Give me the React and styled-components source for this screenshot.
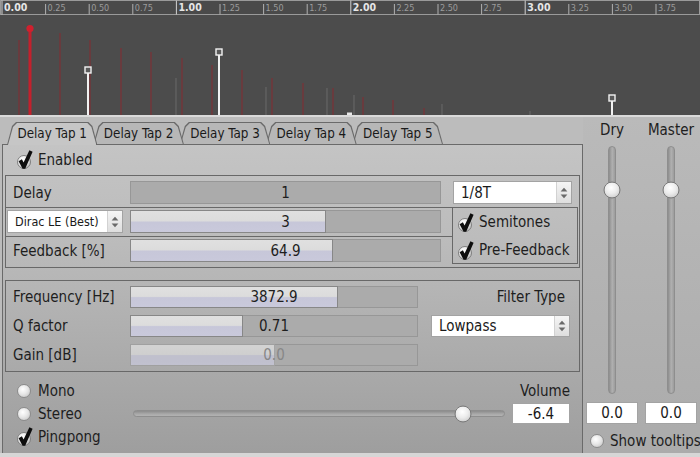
import React from "react";
import styled, { createGlobalStyle } from "styled-components";

const FONT = `"DejaVu Sans Condensed", "DejaVu Sans", Verdana, sans-serif`;

const GlobalStyle = createGlobalStyle`
  html, body { margin: 0; padding: 0; background: #bcbcbc; }
  body {
    width: 700px; height: 457px; overflow: hidden;
    font-family: ${FONT}; font-stretch: condensed; color: #1e1e1e;
  }
  *, *::before, *::after { box-sizing: border-box; }
`;

const Window = styled.div`
  width: 700px;
  height: 457px;
  display: flex;
  flex-direction: column;
  background: #bcbcbc;
`;

const GraphSvg = styled.svg`
  display: block;
  flex: none;
`;

const Lower = styled.div`
  display: flex;
  height: 340px;
  border-bottom: 4px solid #d6d6d6;
`;

const TabArea = styled.div`
  width: 583px;
  display: flex;
  flex-direction: column;
`;

const TabBar = styled.div`
  height: 27px;
  display: flex;
  align-items: flex-end;
  padding-left: 9px;
  position: relative;
  z-index: 2;
`;

const TAB_SHAPE = `polygon(0 100%, 5px 4px, 9px 0, calc(100% - 9px) 0, calc(100% - 5px) 4px, 100% 100%)`;

const Tab = styled.div`
  position: relative;
  z-index: ${(p) => p.$z};
  width: 86.4px;
  height: ${(p) => (p.$active ? 23 : 22)}px;
  margin-bottom: ${(p) => (p.$active ? -1 : 0)}px;
  padding-bottom: ${(p) => (p.$active ? 1 : 0)}px;
  display: flex;
  align-items: center;
  justify-content: center;
  font-size: 13.3px;
  color: #1a1a1a;
  white-space: nowrap;
  &::before {
    content: "";
    position: absolute;
    top: 0;
    bottom: 0;
    left: -2px;
    right: -2px;
    background: #6a6a6a;
    clip-path: ${TAB_SHAPE};
    z-index: -1;
  }
  &::after {
    content: "";
    position: absolute;
    top: 1px;
    bottom: 0;
    left: -1px;
    right: -1px;
    background: ${(p) => (p.$active ? "#c6c6c6" : "#b7b7b7")};
    clip-path: ${TAB_SHAPE};
    z-index: -1;
  }
`;

const Pane = styled.div`
  flex: 1;
  margin-left: 2px;
  border: 1px solid #6a6a6a;
  border-bottom: none;
  background: linear-gradient(#c4c4c4, #bcbcbc 30%, #9e9e9e);
  display: flex;
  flex-direction: column;
  padding: 4px 2px 0 2px;
  position: relative;
  z-index: 1;
`;

const CheckRow = styled.div`
  display: flex;
  align-items: center;
  gap: 5px;
  height: ${(p) => p.$h || 21}px;
  padding-left: ${(p) => p.$pl ?? 12}px;
  font-size: 15px;
  white-space: nowrap;
`;

const GroupBox = styled.div`
  margin-top: ${(p) => p.$mt}px;
  border: 1px solid #686868;
  display: grid;
  grid-template-columns: ${(p) => p.$cols};
  grid-template-rows: ${(p) => p.$rows};
  row-gap: ${(p) => p.$gap}px;
  padding: 5px ${(p) => p.$pr}px 5px 1px;
  align-items: center;
`;

const Label = styled.div`
  grid-area: ${(p) => p.$area};
  padding-left: 6px;
  font-size: 15px;
  white-space: nowrap;
`;

const RightLabel = styled.div`
  grid-area: ${(p) => p.$area};
  justify-self: end;
  padding-right: ${(p) => p.$pr || 0}px;
  font-size: 15px;
  white-space: nowrap;
`;

const SliderField = styled.div`
  grid-area: ${(p) => p.$area};
  position: relative;
  width: ${(p) => p.$w}px;
  height: 100%;
  border: 1px solid #979797;
  background: #ababab;
  display: flex;
  align-items: center;
  justify-content: center;
  font-size: 15px;
  color: ${(p) => (p.$dim ? "#878787" : "#1e1e1e")};
`;

const SliderFill = styled.div`
  position: absolute;
  left: -1px;
  top: -1px;
  bottom: -1px;
  border: 1px solid ${(p) => (p.$dim ? "#a3a3a3" : "#878787")};
  background: linear-gradient(#e0e0e0 0%, #dcdcdc 47%, #c7c7d9 53%, #c9c9db 100%);
  opacity: ${(p) => (p.$dim ? 0.75 : 1)};
`;

const SliderValue = styled.span`
  position: relative;
`;

const Combo = styled.div`
  grid-area: ${(p) => p.$area};
  width: ${(p) => p.$w}px;
  height: 100%;
  margin-left: ${(p) => p.$ml || 0}px;
  background: #fff;
  border: 1px solid #a3a3a3;
  display: flex;
  align-items: stretch;
  font-size: ${(p) => p.$fs}px;
  color: #1a1a1a;
`;

const ComboText = styled.div`
  flex: 1;
  display: flex;
  align-items: center;
  padding-left: 7px;
  white-space: nowrap;
  overflow: hidden;
`;

const ComboArrow = styled.div`
  width: 15px;
  background: linear-gradient(#f5f5f5, #dedede);
  border-left: 1px solid #d2d2d2;
  display: flex;
  align-items: center;
  justify-content: center;
`;

const PitchFrame = styled.div`
  grid-area: 2 / 1 / 3 / 3;
  align-self: stretch;
  margin: -3px 0 -4px -2px;
  border: 1px solid #686868;
  border-right: none;
`;

const CheckGroup = styled.div`
  grid-area: 2 / 3 / 4 / 4;
  align-self: stretch;
  margin: -3px 0 -2px 0;
  border: 1px solid #686868;
  display: grid;
  grid-template-rows: 1fr 1fr;
  padding-left: 5px;
`;

const BottomGrid = styled.div`
  display: grid;
  grid-template-columns: 128px 372px 7px 58px;
  grid-template-rows: 23px 23px 23px;
  padding-top: 7px;
  align-items: center;
`;

const RadioRow = styled.div`
  grid-area: ${(p) => p.$area};
  display: flex;
  align-items: center;
  gap: ${(p) => p.$gap ?? 7}px;
  padding-left: ${(p) => p.$pl ?? 12}px;
  font-size: 15px;
  white-space: nowrap;
`;

const RadioDot = styled.span`
  width: 14px;
  height: 14px;
  flex: none;
  border-radius: 50%;
  border: 1px solid #8c8c8c;
  background: radial-gradient(circle at 40% 35%, #ffffff, #e8e8e8 45%, #bdbdbd);
`;

const HSlider = styled.div`
  grid-area: ${(p) => p.$area};
  position: relative;
  height: 7px;
  border-radius: 4px;
  border: 1px solid #8e8e8e;
  background: linear-gradient(#8c8c8c, #a9a9a9 60%, #b2b2b2);
`;

const Knob = styled.span`
  position: absolute;
  width: 17px;
  height: 17px;
  border-radius: 50%;
  border: 1px solid #7a7a7a;
  background: radial-gradient(circle at 45% 35%, #ffffff, #ececec 45%, #c2c2c2);
  transform: translate(-50%, -50%);
`;

const SpinBox = styled.div`
  grid-area: ${(p) => p.$area};
  height: ${(p) => p.$h}px;
  background: #fff;
  border: 1px solid #a3a3a3;
  display: flex;
  align-items: center;
  justify-content: center;
  font-size: 15px;
  color: #1a1a1a;
`;

const Side = styled.div`
  flex: 1;
  background: linear-gradient(#bababa, #ababab);
  display: grid;
  grid-template-columns: 52px 52px;
  grid-template-rows: 16px 248px 22px 18px;
  column-gap: 7px;
  row-gap: 8px;
  padding: 5px 3px 0 3px;
  align-content: start;
`;

const SideLabel = styled.div`
  justify-self: center;
  align-self: center;
  font-size: 15px;
  white-space: nowrap;
`;

const VSlider = styled.div`
  justify-self: center;
  position: relative;
  width: 8px;
  height: 100%;
  border-radius: 4px;
  border: 1px solid #8e8e8e;
  background: linear-gradient(to right, #8d8d8d, #b0b0b0 55%, #9c9c9c);
`;

const TipRow = styled.div`
  grid-column: 1 / 3;
  display: flex;
  align-items: center;
  gap: 6px;
  padding-left: 4px;
  font-size: 15px;
  white-space: nowrap;
`;

const CheckIcon = () => (
  <svg width="16" height="19" viewBox="0 0 16 19">
    <defs>
      <radialGradient id="chkg" cx="40%" cy="35%" r="70%">
        <stop offset="0" stopColor="#ffffff" />
        <stop offset="0.55" stopColor="#e8e8e8" />
        <stop offset="1" stopColor="#b4b4b4" />
      </radialGradient>
    </defs>
    <circle cx="7" cy="12" r="6.5" fill="url(#chkg)" stroke="#7e7e7e" strokeWidth="1" />
    <path d="M1.6 11.2 L4.9 9.3 L6.6 12.5 L12.4 0.3 L15.6 1.7 L8.2 18.7 L5.6 18.7 Z" fill="#0e0e0e" />
  </svg>
);

const UpDown = () => (
  <svg width="8" height="12" viewBox="0 0 8 12">
    <path d="M4 0.8 L7.4 4.6 L0.6 4.6 Z M4 11.2 L7.4 7.4 L0.6 7.4 Z" fill="#6a6a6a" />
  </svg>
);

const Slider = ({ area, w, fill, value, dim }) => (
  <SliderField $area={area} $w={w} $dim={dim}>
    {fill > 0 && <SliderFill $dim={dim} style={{ width: fill + 1 }} />}
    <SliderValue>{value}</SliderValue>
  </SliderField>
);

const ComboBox = ({ area, w, fs, ml, text }) => (
  <Combo $area={area} $w={w} $fs={fs} $ml={ml}>
    <ComboText>{text}</ComboText>
    <ComboArrow>
      <UpDown />
    </ComboArrow>
  </Combo>
);

const UNIT = 43.6;
const TICKS = Array.from({ length: 16 }, (_, i) => ({
  x: 2 + i * UNIT,
  major: i % 4 === 0,
  label: (i * 0.25).toFixed(2),
}));

const RED = [
  [19, 40], [60, 33], [90, 40], [121, 48], [151, 52], [182, 58], [212, 65],
  [242, 70], [272, 78], [303, 83], [333, 88], [363, 97], [393, 100], [424, 108],
];
const GRAY = [
  [176, 78], [266, 87], [327, 88], [354, 95], [442, 104], [530, 111],
];
const HANDLES = [
  [88, 70], [219, 52], [612, 98],
];

const Graph = () => (
  <GraphSvg width="700" height="117" viewBox="0 0 700 117">
    <rect width="700" height="117" fill="#4c4c4c" />
    <rect x="0.5" y="0.5" width="699" height="14" fill="#4a4a4a" stroke="#9a9a9a" />
    {TICKS.map((t) => (
      <g key={t.label}>
        <line
          x1={t.x}
          x2={t.x}
          y1={t.major ? 0.5 : 4}
          y2="14.5"
          stroke={t.major ? "#d0d0d0" : "#b0b0b0"}
          strokeWidth="1"
        />
        <text
          x={t.x + 2}
          y="11"
          fontFamily={FONT}
          fontSize={t.major ? 10.5 : 9}
          fontWeight={t.major ? 700 : 400}
          fill={t.major ? "#e6e6e6" : "#9c9c9c"}
        >
          {t.label}
        </text>
      </g>
    ))}
    {GRAY.map(([x, y]) => (
      <line key={"g" + x} x1={x} x2={x} y1={y} y2="115" stroke="#666666" strokeWidth="1.2" />
    ))}
    {RED.map(([x, y]) => (
      <line key={"r" + x} x1={x} x2={x} y1={y} y2="115" stroke="#8a2a30" strokeWidth="1.6" opacity="0.6" />
    ))}
    <line x1="30" x2="30" y1="29" y2="115" stroke="#c4202c" strokeWidth="3" />
    <circle cx="30" cy="28.5" r="3.6" fill="#d0202e" />
    {HANDLES.map(([x, y]) => (
      <g key={"h" + x}>
        <line x1={x} x2={x} y1={y + 3} y2="115" stroke="#f2f2f2" strokeWidth="2" />
        <rect x={x - 3} y={y - 3} width="6" height="6" fill="#5a5a5a" stroke="#f2f2f2" strokeWidth="1.4" />
      </g>
    ))}
    <rect x="347" y="112.5" width="5" height="2.5" fill="#e8e8e8" />
    <rect x="0" y="115" width="700" height="2" fill="#dadada" />
  </GraphSvg>
);

const TABS = ["Delay Tap 1", "Delay Tap 2", "Delay Tap 3", "Delay Tap 4", "Delay Tap 5"];

export default function App() {
  return (
    <>
      <GlobalStyle />
      <Window>
        <Graph />
        <Lower>
          <TabArea>
            <TabBar>
              {TABS.map((t, i) => (
                <Tab key={t} $active={i === 0} $z={i === 0 ? 10 : 6 - i}>
                  {t}
                </Tab>
              ))}
            </TabBar>
            <Pane>
              <CheckRow>
                <CheckIcon />
                Enabled
              </CheckRow>

              <GroupBox $mt={5} $cols="123px 322px 126px" $rows="23px 23px 23px" $gap={6} $pr={1}>
                <PitchFrame />
                <Label $area="1 / 1">Delay</Label>
                <Slider area="1 / 2" w={311} fill={0} value="1" />
                <ComboBox area="1 / 3" w={119} fs={15} ml={1} text="1/8T" />
                <ComboBox area="2 / 1" w={116} fs={12.5} text="Dirac LE (Best)" />
                <Slider area="2 / 2" w={311} fill={195} value="3" />
                <CheckGroup>
                  <CheckRow $h={28} $pl={0}>
                    <CheckIcon />
                    Semitones
                  </CheckRow>
                  <CheckRow $h={28} $pl={0}>
                    <CheckIcon />
                    Pre-Feedback
                  </CheckRow>
                </CheckGroup>
                <Label $area="3 / 1">Feedback [%]</Label>
                <Slider area="3 / 2" w={311} fill={202} value="64.9" />
              </GroupBox>

              <GroupBox $mt={12} $cols="123px 301px 139px" $rows="22px 22px 22px" $gap={7} $pr={9}>
                <Label $area="1 / 1">Frequency [Hz]</Label>
                <Slider area="1 / 2" w={288} fill={207} value="3872.9" />
                <RightLabel $area="1 / 3" $pr={5}>Filter Type</RightLabel>
                <Label $area="2 / 1">Q factor</Label>
                <Slider area="2 / 2" w={288} fill={112} value="0.71" />
                <ComboBox area="2 / 3" w={139} fs={15} text="Lowpass" />
                <Label $area="3 / 1">Gain [dB]</Label>
                <Slider area="3 / 2" w={288} fill={144} value="0.0" dim />
              </GroupBox>

              <BottomGrid>
                <RadioRow $area="1 / 1">
                  <RadioDot />
                  Mono
                </RadioRow>
                <RadioRow $area="2 / 1">
                  <RadioDot />
                  Stereo
                </RadioRow>
                <RadioRow $area="3 / 1" $gap={5}>
                  <CheckIcon />
                  Pingpong
                </RadioRow>
                <RightLabel $area="1 / 2 / 2 / 5">Volume</RightLabel>
                <HSlider $area="2 / 2">
                  <Knob style={{ left: 329, top: 2.5 }} />
                </HSlider>
                <SpinBox $area="2 / 4" $h={21}>-6.4</SpinBox>
              </BottomGrid>
            </Pane>
          </TabArea>

          <Side>
            <SideLabel>Dry</SideLabel>
            <SideLabel>Master</SideLabel>
            <VSlider>
              <Knob style={{ left: 3, top: 43 }} />
            </VSlider>
            <VSlider>
              <Knob style={{ left: 3, top: 43 }} />
            </VSlider>
            <SpinBox $h={22}>0.0</SpinBox>
            <SpinBox $h={22}>0.0</SpinBox>
            <TipRow>
              <RadioDot />
              Show tooltips
            </TipRow>
          </Side>
        </Lower>
      </Window>
    </>
  );
}
